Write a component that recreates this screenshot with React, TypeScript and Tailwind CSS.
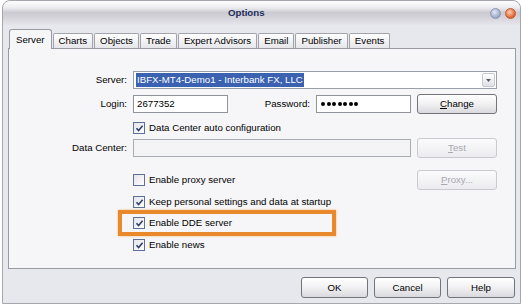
import React from "react";

const font = { fontFamily: '"Liberation Sans", Arial, sans-serif' };

function Check({ checked }: { checked: boolean }) {
  return (
    <div className="w-[12px] h-[12px] shrink-0 border border-[#5b7196] bg-gradient-to-br from-[#e4e4ea] to-white flex items-center justify-center">
      {checked && (
        <svg width="9" height="9" viewBox="0 0 9 9">
          <path d="M1.5 4.2 L3.6 6.6 L7.6 1.8" fill="none" stroke="#2c4170" strokeWidth="1.6" />
        </svg>
      )}
    </div>
  );
}

function CheckRow({ checked, label }: { checked: boolean; label: string }) {
  return (
    <div className="flex items-center gap-[4px] h-[12px]">
      <Check checked={checked} />
      <span className="text-[9.7px] leading-none text-black">{label}</span>
    </div>
  );
}

function Btn({ children, disabled, w = "w-[80px]", h = "h-[20px]" }: { children: React.ReactNode; disabled?: boolean; w?: string; h?: string }) {
  return (
    <div
      className={`${w} ${h} shrink-0 rounded-[3px] border flex items-center justify-center text-[9.7px] leading-none ${
        disabled
          ? "border-[#c9c9cf] bg-gradient-to-b from-[#fbfbfc] to-[#ececf0] text-[#a8a8b0]"
          : "border-[#73737c] bg-gradient-to-b from-white via-[#f1f1f3] to-[#d9d9de] text-black"
      }`}
    >
      {children}
    </div>
  );
}

function Tab({ label, active }: { label: string; active?: boolean }) {
  if (active) {
    return (
      <div className="relative z-10 h-[20px] -mb-px px-[6px] flex items-center border border-b-0 border-[#9a9aa3] rounded-t-[3px] bg-[#f6f6f8] text-[9.7px] leading-none text-black">
        {label}
      </div>
    );
  }
  return (
    <div className="h-[15px] px-[5px] flex items-center border border-b-0 border-[#a2a2aa] rounded-t-[2px] bg-gradient-to-b from-white to-[#e6e6ea] text-[9.7px] leading-none text-black">
      {label}
    </div>
  );
}

export default function App() {
  return (
    <div className="w-[523px] h-[307px] bg-white overflow-hidden" style={font}>
      <div className="ml-[2px] w-[519px] h-[304px] rounded-t-[8px] border border-[#a6a6ae] bg-[#e7e7ee] flex flex-col">
        {/* Title bar */}
        <div className="relative h-[24px] rounded-t-[8px] bg-[linear-gradient(to_bottom,#fdfdfd_0%,#ececf0_28%,#cacad0_48%,#d4d4da_70%,#e5e5eb_100%)] flex items-center">
          <span className="ml-[225px] text-[9.7px] font-bold text-[#1e2c5c] leading-none">Options</span>
          <div className="ml-auto mr-[4px] flex items-center gap-[4px]">
            <div className="w-[11px] h-[11px] rounded-full border border-[#8a96b4] bg-[radial-gradient(circle_at_40%_35%,#e4e9f4,#98a6c8_70%)]" />
            <div className="w-[11px] h-[11px] rounded-full border border-[#c05a30] bg-[radial-gradient(circle_at_40%_35%,#ffd0b0,#e06030_70%)]" />
          </div>
        </div>

        {/* Tabs */}
        <div className="mt-[3px] ml-[6px] flex items-end gap-[1px] h-[20px]">
          <Tab label="Server" active />
          <Tab label="Charts" />
          <Tab label="Objects" />
          <Tab label="Trade" />
          <Tab label="Expert Advisors" />
          <Tab label="Email" />
          <Tab label="Publisher" />
          <Tab label="Events" />
        </div>

        {/* Panel */}
        <div className="ml-[5px] w-[508px] h-[221px] border border-[#9a9aa3] bg-[#f6f6f8] pt-[22px] pr-[18px] flex flex-col">
          {/* Server */}
          <div className="flex items-center gap-[6px]">
            <div className="w-[118px] text-right text-[9.7px] leading-none">Server:</div>
            <div className="flex-1 h-[18px] border border-[#9aa0aa] bg-white flex items-center pl-[2px] pr-px">
              <span className="bg-[#3a62b0] text-white text-[9.7px] leading-none px-px py-[2px]">IBFX-MT4-Demo1 - Interbank FX, LLC</span>
              <div className="ml-auto w-[13px] h-[14px] rounded-[2px] border border-[#c4c8d0] bg-gradient-to-b from-white to-[#dfe1e6] flex items-center justify-center">
                <svg width="5" height="3" viewBox="0 0 5 3"><path d="M0 0 H5 L2.5 3 Z" fill="#555b66" /></svg>
              </div>
            </div>
          </div>

          {/* Login */}
          <div className="mt-[5px] flex items-center">
            <div className="w-[118px] text-right text-[9.7px] leading-none">Login:</div>
            <div className="ml-[6px] w-[95px] h-[18px] border border-[#8f949c] bg-white flex items-center pl-[3px] text-[9.7px] leading-none">2677352</div>
            <div className="w-[82px] text-right text-[9.7px] leading-none">Password:</div>
            <div className="ml-[6px] w-[95px] h-[18px] border border-[#8f949c] bg-white flex items-center pl-[4px] gap-[1.5px]">
              {Array.from({ length: 7 }).map((_, i) => (
                <div key={i} className="w-[4px] h-[4px] rounded-full bg-black" />
              ))}
            </div>
            <div className="ml-[6px]">
              <Btn>
                <span><span className="underline">C</span>hange</span>
              </Btn>
            </div>
          </div>

          {/* Data center auto */}
          <div className="mt-[8px] ml-[124px]">
            <CheckRow checked label="Data Center auto configuration" />
          </div>

          {/* Data center */}
          <div className="mt-[4px] flex items-center">
            <div className="w-[118px] text-right text-[9.7px] leading-none">Data Center:</div>
            <div className="ml-[6px] w-[278px] h-[18px] border border-[#a8acb4] bg-[#f4f4f6]" />
            <div className="ml-[6px]">
              <Btn disabled>
                <span><span className="underline">T</span>est</span>
              </Btn>
            </div>
          </div>

          {/* Proxy */}
          <div className="mt-[12px] ml-[124px] flex items-center justify-between">
            <CheckRow checked={false} label="Enable proxy server" />
            <Btn disabled>
              <span><span className="underline">P</span>roxy...</span>
            </Btn>
          </div>

          <div className="mt-[6px] ml-[124px]">
            <CheckRow checked label="Keep personal settings and data at startup" />
          </div>

          <div className="relative mt-[9px] ml-[124px]">
            <div className="absolute left-[-15px] top-[-7px] w-[218px] h-[26px] border-[4px] border-[#e8892c] shadow-[0_0_2px_#f2b070]" />
            <CheckRow checked label="Enable DDE server" />
          </div>

          <div className="mt-[10px] ml-[124px]">
            <CheckRow checked label="Enable news" />
          </div>
        </div>

        {/* Bottom buttons */}
        <div className="mt-[8px] mr-[5px] flex justify-end gap-[6px]">
          <Btn w="w-[67px]" h="h-[21px]">OK</Btn>
          <Btn w="w-[67px]" h="h-[21px]">Cancel</Btn>
          <Btn w="w-[68px]" h="h-[21px]">Help</Btn>
        </div>
      </div>
    </div>
  );
}
